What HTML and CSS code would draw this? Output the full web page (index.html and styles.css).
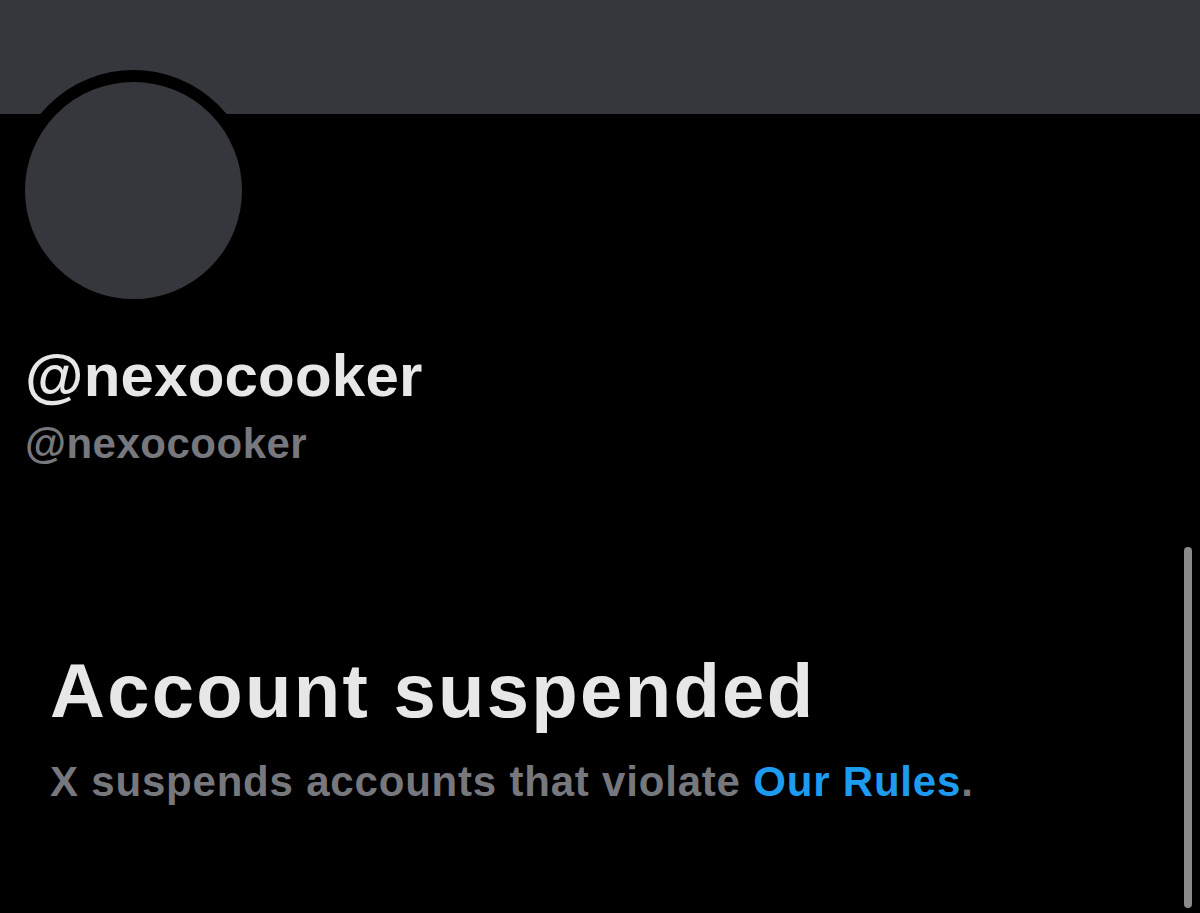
FILE: index.html
```html
<!DOCTYPE html>
<html lang="en">
<head>
    <meta charset="UTF-8">
    <meta name="viewport" content="width=device-width, initial-scale=1.0">
    <title>@nexocooker</title>
    <link rel="stylesheet" href="styles.css">
</head>
<body>

    <!-- Profile header -->
    <header class="banner"></header>

    <section class="profile">
        <div class="avatar"></div>
        <h1 class="display-name">@nexocooker</h1>
        <p class="handle">@nexocooker</p>
    </section>

    <!-- Suspended notice -->
    <section class="suspended">
        <h2>Account suspended</h2>
        <p>X suspends accounts that violate <a href="#">Our Rules</a>.</p>
    </section>

    <div class="scroll-thumb"></div>

</body>
</html>
```

FILE: styles.css
```css
/* Dark profile theme */
body {
    background-color: #000;
    color: #e7e7e8;
    font-family: "Liberation Sans", Arial, sans-serif;
    margin: 0;
    height: 913px;
    overflow: hidden;
}

/* Banner */
.banner {
    height: 114px;
    background-color: #36373c;
}

/* Profile */
.profile {
    padding-left: 25px;
}

.avatar {
    width: 217px;
    height: 217px;
    margin-top: -44px;
    margin-left: -12px;
    border: 12px solid #000;
    border-radius: 50%;
    background-color: #36373c;
}

.display-name {
    margin: 30px 0 0;
    font-size: 60px;
    line-height: 70px;
    font-weight: bold;
    letter-spacing: 0.2px;
}

.handle {
    margin: 8px 0 0;
    font-size: 42px;
    line-height: 50px;
    font-weight: bold;
    color: #77787d;
    letter-spacing: 0.5px;
}

/* Suspended notice */
.suspended {
    padding: 180px 0 0 50px;
}

.suspended h2 {
    margin: 0;
    font-size: 76px;
    line-height: 84px;
    font-weight: bold;
    letter-spacing: 2.3px;
}

.suspended p {
    margin: 24px 0 0;
    font-size: 42px;
    line-height: 50px;
    font-weight: bold;
    color: #77787d;
    letter-spacing: 0.8px;
}

.suspended a {
    color: #1d9bf0;
    text-decoration: none;
}

/* Scrollbar thumb */
.scroll-thumb {
    position: fixed;
    top: 547px;
    right: 8px;
    width: 8px;
    height: 361px;
    border-radius: 4px;
    background-color: #8a8a8c;
}
```
